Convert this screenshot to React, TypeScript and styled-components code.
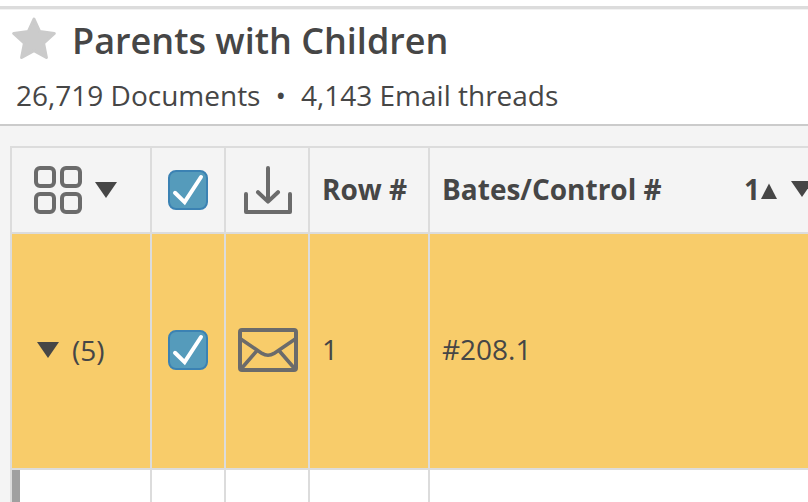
import React, { useState } from "react";
import styled, { createGlobalStyle } from "styled-components";

const color = {
  text: "#464646",
  icon: "#6b6b6b",
  line: "#dcdcdc",
  canvas: "#f4f4f4",
  highlight: "#f8cc6a",
};

const GlobalStyle = createGlobalStyle`
  * { box-sizing: border-box; }
  body {
    margin: 0;
    background: #fff;
    color: ${color.text};
    font-family: "Open Sans", "Noto Sans", sans-serif;
    font-size: 28px;
    line-height: 38px;
  }
`;

const Page = styled.main`
  display: flex;
  flex-direction: column;
  min-height: 100vh;
  padding-top: 6px;
  background: #fff;
`;

const Header = styled.header`
  padding: 8px 16px 10px;
  border-top: 3px solid ${color.line};
  border-bottom: 2px solid #cbcbcb;
  box-shadow: inset 0 1px 0 #f2f2f2;
`;

const TitleRow = styled.div`
  display: flex;
  align-items: flex-start;
  gap: 16px;
  margin: 0 0 11px -4px;
`;

const Title = styled.h1`
  margin: 0;
  font-size: 36px;
  line-height: 48px;
  font-weight: 600;
`;

const IconButton = styled.button`
  display: flex;
  align-items: center;
  gap: 13px;
  padding: 0;
  border: 0;
  background: none;
  color: inherit;
  font: inherit;
  cursor: pointer;

  svg { display: block; flex: none; }
`;

const Summary = styled.div`
  display: flex;
  gap: 15px;
  white-space: nowrap;
`;

const TableArea = styled.section`
  flex: 1;
  padding: 20px 0 0 10px;
  overflow: hidden;
  background: ${color.canvas};
`;

const Table = styled.table`
  width: calc(100% + 20px);
  table-layout: fixed;
  border-collapse: separate;
  border-spacing: 0;
  border-top: 2px solid ${color.line};
  border-left: 2px solid ${color.line};
  background: #fff;
`;

const Col = styled.col<{ $width?: number }>`
  width: ${(p) => (p.$width ? `${p.$width}px` : "auto")};
`;

const Row = styled.tr<{ $tone?: string }>`
  background: ${(p) => p.$tone ?? "#fff"};
`;

const HeadCell = styled.th<{ $pad?: number }>`
  height: 86px;
  padding: 0 0 0 ${(p) => p.$pad ?? 12}px;
  border-right: 2px solid ${color.line};
  border-bottom: 2px solid ${color.line};
  font-weight: 700;
  text-align: left;
  white-space: nowrap;

  svg { display: block; }
`;

const TextHeadCell = styled(HeadCell)`
  padding-bottom: 2px;
`;

const Cell = styled.td<{ $pad?: number }>`
  height: 236px;
  padding: 0 0 2px ${(p) => p.$pad ?? 12}px;
  border-right: 2px solid ${color.line};
  border-bottom: 2px solid ${color.line};

  svg { display: block; }
`;

const TextCell = styled(Cell)`
  padding-bottom: 4px;
`;

const NextCell = styled.td<{ $marked?: boolean }>`
  height: 32px;
  padding: 0;
  border-right: 2px solid ${color.line};
  box-shadow: ${(p) => (p.$marked ? "inset 8px 0 0 #a0a0a0" : "none")};
`;

const ColumnHead = styled.div`
  display: flex;
  align-items: center;
  justify-content: space-between;
  padding-right: 13px;
`;

const SortGroup = styled.div`
  display: flex;
  align-items: center;
  gap: 14px;
`;

const SortOrder = styled.span`
  display: flex;
  align-items: center;
  gap: 1px;

  svg { margin-top: 4px; }
`;

const CheckLabel = styled.label`
  display: grid;
  width: 40px;
  height: 40px;
  cursor: pointer;

  > * { grid-area: 1 / 1; }
  svg { pointer-events: none; }
  input:not(:checked) + svg { visibility: hidden; }
`;

const CheckInput = styled.input`
  appearance: none;
  width: 40px;
  height: 40px;
  margin: 0;
  border: 2px solid #3b82b3;
  border-radius: 8px;
  background: #fff;

  &:checked { background: #559bbb; }
`;

function Check({ label }: { label: string }) {
  const [on, setOn] = useState(true);
  return (
    <CheckLabel>
      <CheckInput
        type="checkbox"
        aria-label={label}
        checked={on}
        onChange={(e) => setOn(e.target.checked)}
      />
      <svg width="40" height="40" viewBox="0 0 40 40" fill="none" stroke="#fff" strokeWidth="4" strokeLinecap="round" aria-hidden="true">
        <path d="M7 22.8 16.6 32.2 33 7" />
      </svg>
    </CheckLabel>
  );
}

const DownTriangle = () => (
  <svg width="22" height="16" viewBox="0 0 22 16" fill={color.text} aria-hidden="true">
    <path d="M0 0H22L11 16Z" />
  </svg>
);

const UpTriangle = () => (
  <svg width="16" height="16" viewBox="0 0 16 16" fill={color.text} aria-hidden="true">
    <path d="M8 0.5 16 16H0Z" />
  </svg>
);

const StarIcon = () => (
  <svg width="44" height="43" viewBox="0 0 44 43" fill="#cbcbcb" stroke="#cbcbcb" strokeWidth="3" strokeLinejoin="round" aria-hidden="true">
    <path d="M22 2 27.6 14.4 42.3 16.5 31.6 26.2 34.4 40.5 22 33.6 9.6 40.5 12.4 26.2 1.7 16.5 16.4 14.4Z" />
  </svg>
);

const GridIcon = () => (
  <svg width="48" height="48" viewBox="0 0 48 48" fill="none" stroke={color.icon} strokeWidth="4" aria-hidden="true">
    <rect x="2" y="2" width="18" height="18" rx="4" />
    <rect x="28" y="2" width="18" height="18" rx="4" />
    <rect x="2" y="28" width="18" height="18" rx="4" />
    <rect x="28" y="28" width="18" height="18" rx="4" />
  </svg>
);

const DownloadIcon = () => (
  <svg width="48" height="48" viewBox="0 0 48 48" fill="none" stroke={color.icon} strokeWidth="4" strokeLinecap="round" strokeLinejoin="round" aria-hidden="true">
    <path d="M24 2V35M14 26.2 24 35.6 34 26.2M2 28V46H46V28" />
  </svg>
);

const EnvelopeIcon = () => (
  <svg width="60" height="44" viewBox="0 0 60 44" fill="none" stroke={color.icon} strokeWidth="4" role="img" aria-label="Email">
    <rect x="2" y="2" width="56" height="40" rx="2" />
    <path d="M2 10.5 24 25.4Q30 29 36 25.4L58 10.5M19.5 22 3 41M40.5 22 57 41" strokeWidth="3.6" />
  </svg>
);

export default function App() {
  return (
    <>
      <GlobalStyle />
      <Page>
        <Header>
          <TitleRow>
            <IconButton aria-label="Favorite">
              <StarIcon />
            </IconButton>
            <Title>Parents with Children</Title>
          </TitleRow>
          <Summary>
            <span>26,719 Documents</span>
            <span>•</span>
            <span>4,143 Email threads</span>
          </Summary>
        </Header>
        <TableArea>
          <Table>
            <colgroup>
              <Col $width={140} />
              <Col $width={74} />
              <Col $width={84} />
              <Col $width={120} />
              <Col />
            </colgroup>
            <thead>
              <Row $tone={color.canvas}>
                <HeadCell $pad={22}>
                  <IconButton aria-label="View options">
                    <GridIcon />
                    <DownTriangle />
                  </IconButton>
                </HeadCell>
                <HeadCell $pad={16}>
                  <Check label="Select all rows" />
                </HeadCell>
                <HeadCell $pad={18}>
                  <IconButton aria-label="Download">
                    <DownloadIcon />
                  </IconButton>
                </HeadCell>
                <TextHeadCell>Row #</TextHeadCell>
                <TextHeadCell>
                  <ColumnHead>
                    <span>Bates/Control #</span>
                    <SortGroup>
                      <SortOrder>
                        1<UpTriangle />
                      </SortOrder>
                      <IconButton aria-label="Column menu">
                        <DownTriangle />
                      </IconButton>
                    </SortGroup>
                  </ColumnHead>
                </TextHeadCell>
              </Row>
            </thead>
            <tbody>
              <Row $tone={color.highlight}>
                <Cell $pad={25}>
                  <IconButton aria-expanded="true">
                    <DownTriangle />
                    (5)
                  </IconButton>
                </Cell>
                <Cell $pad={16}>
                  <Check label="Select row 1" />
                </Cell>
                <Cell>
                  <EnvelopeIcon />
                </Cell>
                <TextCell>1</TextCell>
                <TextCell>#208.1</TextCell>
              </Row>
              <Row>
                <NextCell $marked />
                <NextCell />
                <NextCell />
                <NextCell />
                <NextCell />
              </Row>
            </tbody>
          </Table>
        </TableArea>
      </Page>
    </>
  );
}
